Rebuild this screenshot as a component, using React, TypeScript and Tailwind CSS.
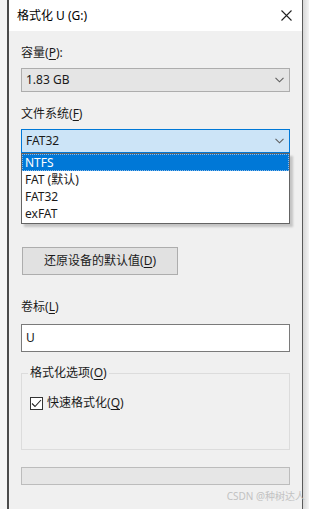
const font = { fontFamily: '"Noto Sans", "Noto Sans CJK SC", sans-serif' };

const Chevron = () => (
  <svg width="9" height="6" viewBox="0 0 9 6" className="shrink-0">
    <path d="M0.5 0.8 L4.5 4.8 L8.5 0.8" fill="none" stroke="#5f5f5f" strokeWidth="1.1" />
  </svg>
);

const Key = ({ k }: { k: string }) => (
  <>
    (<span className="underline underline-offset-2">{k}</span>)
  </>
);

const App = () => {
  const items = ["NTFS", "FAT (默认)", "FAT32", "exFAT"];
  return (
    <div className="relative flex h-[509px] w-[309px] bg-[#f4f4f4] text-[12px] text-[#1a1a1a]" style={font}>
      <div className="ml-[7px] flex w-[296px] flex-col border-l-2 border-r border-l-[#4a4a4a] border-r-[#5a5a5a] bg-[#f0f0f0]">
        {/* title bar */}
        <div className="flex h-[31px] items-center justify-between bg-white pl-[8px] pr-[10px]">
          <span className="text-[12px] leading-[16px] text-black">格式化 U (G:)</span>
          <svg width="11" height="11" viewBox="0 0 11 11">
            <path d="M0.5 0.5 L10.5 10.5 M10.5 0.5 L0.5 10.5" stroke="#222" strokeWidth="1.1" />
          </svg>
        </div>

        <div className="flex flex-col px-[12px]">
          <div className="mt-[14px] leading-[16px]">
            容量<Key k="P" />:
          </div>
          <div className="mt-[7px] flex h-[24px] items-center justify-between border border-[#adadad] bg-[#e5e5e5] pl-[4px] pr-[5px]">
            <span className="leading-[16px]">1.83 GB</span>
            <Chevron />
          </div>

          <div className="mt-[14px] leading-[16px]">
            文件系统<Key k="F" />
          </div>
          <div className="relative mt-[7px]">
            <div className="flex h-[24px] items-center justify-between border border-[#0078d7] bg-[#cce4f7] pl-[4px] pr-[5px]">
              <span className="leading-[16px]">FAT32</span>
              <Chevron />
            </div>
            <div className="absolute left-0 right-0 top-[24px] z-10 border border-[#646464] bg-white pb-[1px] shadow-[3px_3px_2px_rgba(0,0,0,0.18)]">
              {items.map((it, i) => (
                <div
                  key={it}
                  className={
                    i === 0
                      ? "flex h-[17px] items-center border border-dotted border-[#8ab8e8] bg-[#0078d7] pl-[2px] text-white"
                      : "flex h-[17px] items-center pl-[3px] text-[#1a1a1a]"
                  }
                >
                  <span className="leading-[16px]">{it}</span>
                </div>
              ))}
            </div>
          </div>

          <div className="ml-[1px] mt-[94px] flex h-[28px] w-[156px] items-center justify-center border border-[#adadad] bg-[#e1e1e1]">
            <span className="leading-[16px]">
              还原设备的默认值<Key k="D" />
            </span>
          </div>

          <div className="mt-[24px] leading-[16px]">
            卷标<Key k="L" />
          </div>
          <div className="mt-[9px] flex h-[28px] items-center border border-[#7a7a7a] bg-white pl-[4px]">
            <span className="leading-[16px]">U</span>
          </div>

          <div className="relative mt-[21px] h-[77px] border border-[#dcdcdc]">
            <div className="absolute left-[6px] top-[-9px] bg-[#f0f0f0] px-[2px] leading-[16px]">
              格式化选项<Key k="O" />
            </div>
            <div className="mt-[21px] flex items-center gap-[4px] pl-[8px]">
              <div className="flex h-[13px] w-[13px] items-center justify-center border border-[#333] bg-white">
                <svg width="11" height="9" viewBox="0 0 11 9">
                  <path d="M1 4.5 L4 7.5 L10 1" fill="none" stroke="#222" strokeWidth="1.1" />
                </svg>
              </div>
              <span className="leading-[16px]">
                快速格式化<Key k="Q" />
              </span>
            </div>
          </div>

          <div className="mt-[17px] h-[18px] border border-[#bcbcbc] bg-[#e6e6e6]" />
        </div>
      </div>
      <div className="w-[6px] bg-gradient-to-r from-[#d8d8d8] to-[#f4f4f4]" />
      <div className="absolute bottom-[7px] right-[4px] text-[10px] leading-[12px] text-[#c2c2c2]">
        CSDN @种树达人
      </div>
    </div>
  );
};

export default App;
